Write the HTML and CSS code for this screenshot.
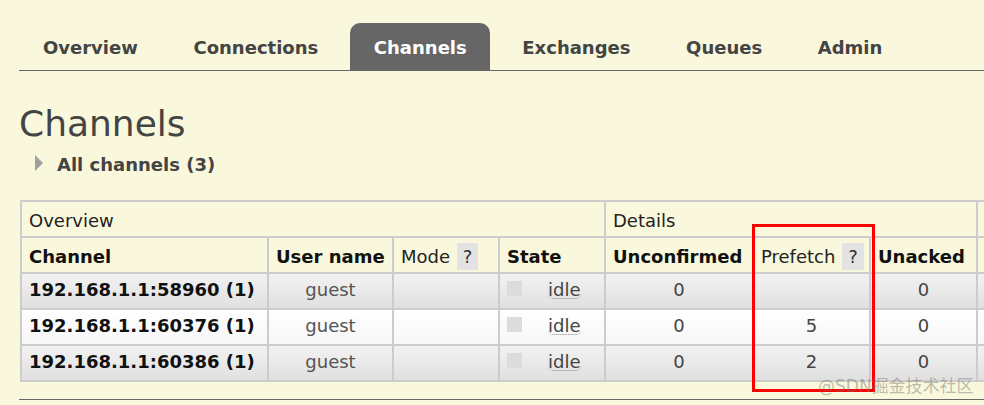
FILE: index.html
```html
<!DOCTYPE html>
<html>
<head>
<meta charset="utf-8">
<title>Channels</title>
<link rel="stylesheet" href="styles.css">
</head>
<body>
<div class="page">
  <ul class="menu">
    <li>Overview</li>
    <li>Connections</li>
    <li class="active">Channels</li>
    <li>Exchanges</li>
    <li>Queues</li>
    <li>Admin</li>
  </ul>
  <h1>Channels</h1>
  <div class="section-title"><span class="arrow"></span><span>All channels (3)</span></div>
  <div class="table-wrap">
    <table class="list">
      <colgroup>
        <col class="w-channel"><col class="w-user"><col class="w-mode"><col class="w-state">
        <col class="w-unconf"><col class="w-prefetch"><col class="w-unacked">
        <col class="w-rate"><col class="w-rate"><col class="w-rate">
      </colgroup>
      <thead>
        <tr class="group">
          <th colspan="4">Overview</th>
          <th colspan="3">Details</th>
          <th colspan="3"></th>
        </tr>
        <tr class="cols">
          <th>Channel</th>
          <th>User name</th>
          <th class="plain">Mode <span class="help">?</span></th>
          <th>State</th>
          <th>Unconfirmed</th>
          <th class="plain">Prefetch <span class="help">?</span></th>
          <th>Unacked</th>
          <th></th>
          <th></th>
          <th></th>
        </tr>
      </thead>
      <tbody>
        <tr class="odd">
          <td class="chan">192.168.1.1:58960 (1)</td>
          <td class="user">guest</td>
          <td></td>
          <td class="state"><span class="key"></span><abbr>idle</abbr></td>
          <td>0</td>
          <td></td>
          <td>0</td>
          <td></td><td></td><td></td>
        </tr>
        <tr class="even">
          <td class="chan">192.168.1.1:60376 (1)</td>
          <td class="user">guest</td>
          <td></td>
          <td class="state"><span class="key"></span><abbr>idle</abbr></td>
          <td>0</td>
          <td>5</td>
          <td>0</td>
          <td></td><td></td><td></td>
        </tr>
        <tr class="odd">
          <td class="chan">192.168.1.1:60386 (1)</td>
          <td class="user">guest</td>
          <td></td>
          <td class="state"><span class="key"></span><abbr>idle</abbr></td>
          <td>0</td>
          <td>2</td>
          <td>0</td>
          <td></td><td></td><td></td>
        </tr>
      </tbody>
    </table>
  </div>
  <div class="next-section"></div>
</div>
<div class="highlight"></div>
<div class="watermark">@SDN掘金技术社区</div>
</body>
</html>
```

FILE: styles.css
```css
html, body {
  margin: 0;
  padding: 0;
}

body {
  background: #f9f7dc;
  font-family: "DejaVu Sans", Verdana, sans-serif;
  font-size: 18px;
  color: #444;
  overflow: hidden;
  position: relative;
  min-height: 405px;
}

.page {
  padding: 23px 0 0 19px;
}

.menu {
  display: flex;
  gap: 8.6px;
  list-style: none;
  margin: 0;
  padding: 0;
  border-bottom: 1px solid #666;
}

.menu li {
  padding: 14px 23px 11px 24px;
  line-height: 22px;
  font-weight: bold;
  color: #444;
  border-radius: 10px 10px 0 0;
  white-space: nowrap;
}

.menu li.active {
  background: #666;
  color: #fff;
}

h1 {
  margin: 31px 0 0 0;
  font-size: 36px;
  font-weight: normal;
  line-height: 44px;
  color: #444;
}

.section-title {
  display: flex;
  align-items: flex-start;
  gap: 14px;
  margin: 8px 0 0 16px;
  line-height: 22px;
  font-weight: bold;
  color: #444;
}

.arrow {
  width: 0;
  height: 0;
  margin-top: 1px;
  border-left: 8px solid #a0a0a0;
  border-top: 8px solid transparent;
  border-bottom: 8px solid transparent;
}

.table-wrap {
  margin-top: 24px;
  overflow: hidden;
}

table.list {
  margin-left: 1px;
  table-layout: fixed;
  width: 1288px;
  border-collapse: separate;
  border-spacing: 0;
  border-top: 2px solid #ccc;
  border-left: 2px solid #ccc;
}

.w-channel { width: 247px; }
.w-user { width: 125px; }
.w-mode { width: 106px; }
.w-state { width: 106px; }
.w-unconf { width: 148px; }
.w-prefetch { width: 117px; }
.w-unacked { width: 107px; }
.w-rate { width: 110px; }

table.list th,
table.list td {
  box-sizing: border-box;
  border-right: 2px solid #ccc;
  border-bottom: 2px solid #ccc;
  line-height: 22px;
  white-space: nowrap;
  overflow: hidden;
}

table.list th {
  padding: 8px 7px 4px;
  text-align: left;
  color: #111;
}

table.list tr.group th {
  font-weight: normal;
  color: #222;
}

table.list th.plain {
  font-weight: normal;
  color: #222;
}

.help {
  display: inline-block;
  padding: 3px 6px;
  margin: -3px 0 -3px 1px;
  background: #e3e3e3;
  color: #333;
  line-height: 21px;
}

table.list td {
  padding: 5px 7px 7px;
  text-align: center;
  color: #444;
}

table.list tr.odd td {
  background: linear-gradient(#f2f2f2, #e0e0e0);
}

table.list tr.even td {
  background: linear-gradient(#ffffff, #f6f6f6);
}

table.list td.chan {
  text-align: left;
  font-weight: bold;
  color: #111;
}

table.list td.user {
  color: #555;
}

table.list td.state {
  text-align: left;
}

.key {
  display: inline-block;
  width: 15px;
  height: 15px;
  background: #dcdcdc;
}

abbr {
  display: inline-block;
  margin-left: 26px;
  line-height: 16px;
  text-decoration: none;
  border-bottom: 1px dotted #888;
  border-radius: 0 0 5px 5px;
  color: #444;
}

.next-section {
  margin-top: 17px;
  border-top: 1px solid #666;
  height: 20px;
}

.highlight {
  position: absolute;
  left: 752px;
  top: 224px;
  width: 123px;
  height: 168px;
  box-sizing: border-box;
  border: 3px solid #ff0000;
}

.watermark {
  position: absolute;
  left: 818px;
  top: 376px;
  font-family: "DejaVu Sans", "Noto Sans CJK SC", sans-serif;
  font-size: 17px;
  line-height: 20px;
  color: rgba(110, 110, 110, 0.45);
  white-space: nowrap;
}
```
